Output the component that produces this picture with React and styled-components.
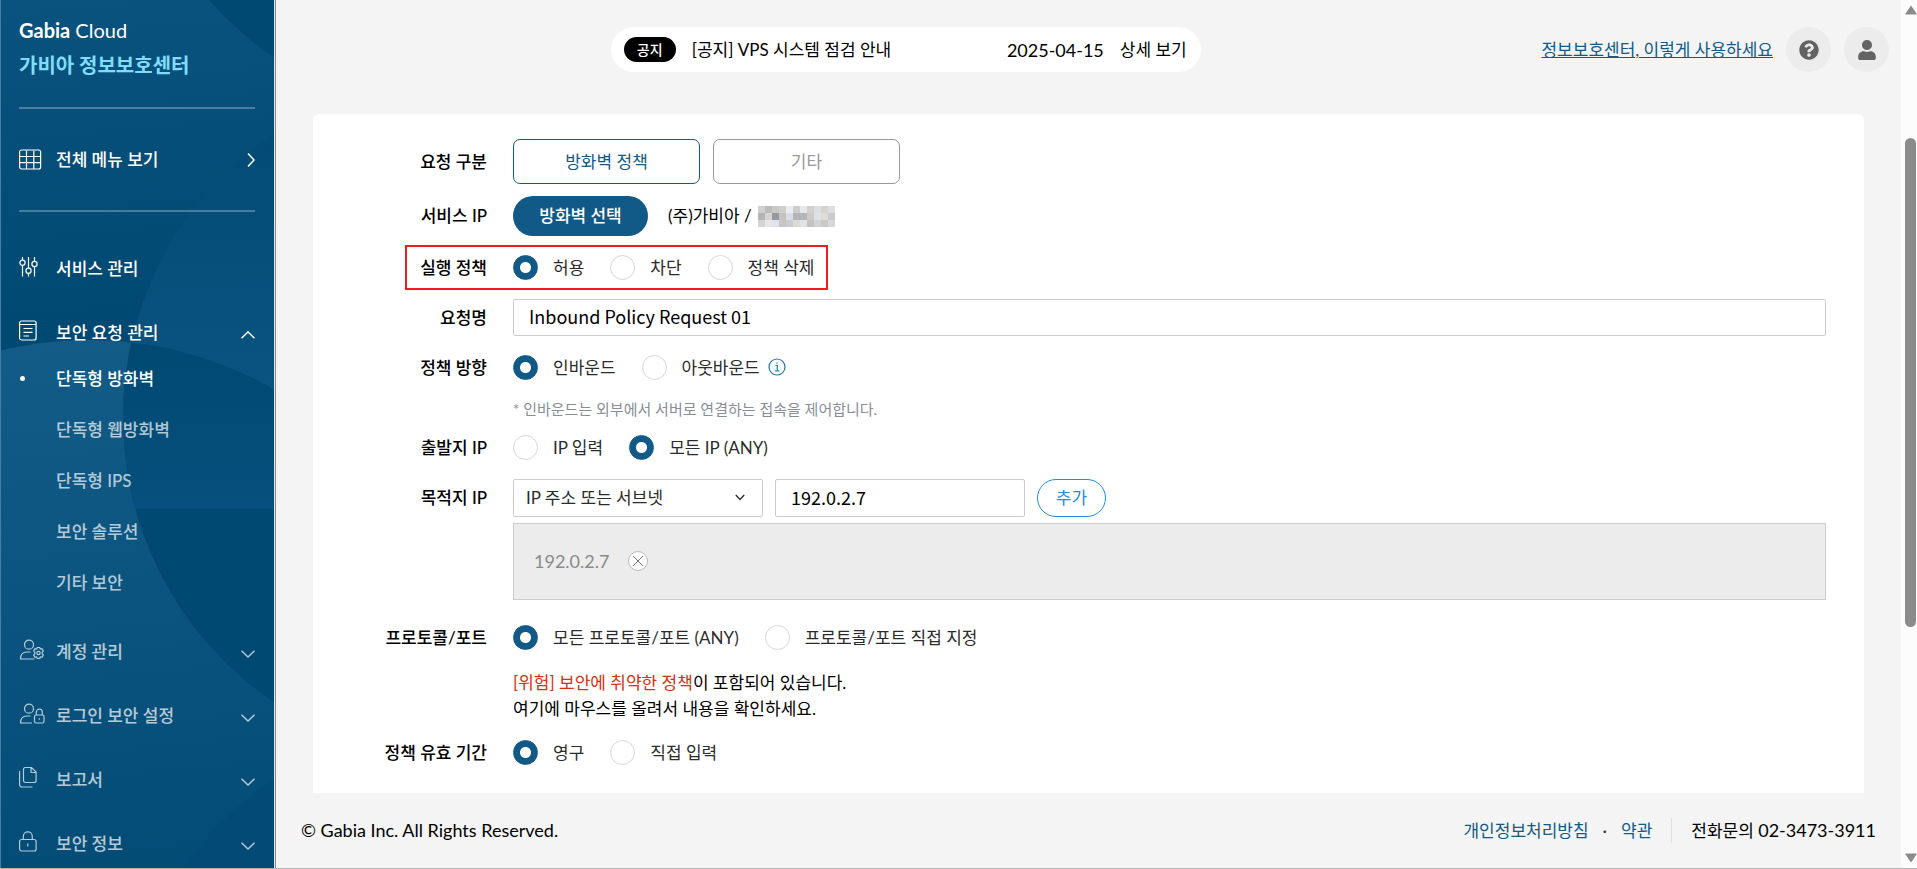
import React from 'react'
import styled, { createGlobalStyle, css } from 'styled-components'
import { FaQuestionCircle, FaUser } from 'react-icons/fa'

const menuTop = [
  { label: '서비스 관리', icon: 'sliders', active: true },
  { label: '보안 요청 관리', icon: 'document', active: true, open: true },
];

const subMenu = ['단독형 방화벽', '단독형 웹방화벽', '단독형 IPS', '보안 솔루션', '기타 보안'];

const menuBottom = [
  { label: '계정 관리', icon: 'userGear' },
  { label: '로그인 보안 설정', icon: 'userLock' },
  { label: '보고서', icon: 'copy' },
  { label: '보안 정보', icon: 'lock' },
];

const icons = {
  sliders: (
    <>
      <path d="M3.500 1v3M3.500 9.500V20.500M9.500 1v11M9.500 17.500v3M15.500 1v4.500M15.500 10.500v10" />
      <circle cx="3.500" cy="6.800" r="2.600" />
      <circle cx="9.500" cy="14.700" r="2.600" />
      <circle cx="15.500" cy="8" r="2.600" />
    </>
  ),
  document: (
    <>
      <rect x="0.600" y="1" width="16.500" height="19" rx="2" />
      <path d="M1 4.500h16M4.500 8.500h9M4.500 12.300h9M4.500 16h5.500" />
    </>
  ),
  userGear: (
    <>
      <circle cx="10" cy="5.700" r="4.500" />
      <path d="M15.500 20H1.500c0-4.500 2.500-7 6.500-7h3.500" />
      <circle cx="19.500" cy="14" r="1.700" />
      <path d="M18.200 8.500h2.600l.5 1.600 1.700-.4 1.300 2.200-1.100 1.300v1.600l1.100 1.300-1.300 2.200-1.700-.4-.5 1.600h-2.600l-.5-1.600-1.700.4-1.300-2.200 1.100-1.300v-1.600l-1.100-1.300 1.300-2.200 1.700.4z" />
    </>
  ),
  userLock: (
    <>
      <circle cx="10" cy="5.700" r="4.500" />
      <path d="M13 20H1.500c0-4.500 2.500-7 6.500-7h3.500" />
      <rect x="15.500" y="12" width="9.500" height="8" rx="1.500" />
      <path d="M17.300 12V9.200a3 3 0 0 1 6 0V12M20.300 15.300v1.500" />
    </>
  ),
  copy: (
    <>
      <path d="M4.500 2.500a2 2 0 0 1 2-2h6L17.100 5v8.500a2 2 0 0 1-2 2H6.500a2 2 0 0 1-2-2zM12 .5V5.500h5" />
      <path d="M.6 4v13.500a2.500 2.500 0 0 0 2.500 2.500H13.500" />
    </>
  ),
  lock: (
    <>
      <rect x="0.600" y="8.500" width="16.500" height="11.500" rx="2" />
      <path d="M4.300 8.500V5.400a4.500 4.500 0 0 1 9 0V8.500M8.800 12.500v3" />
    </>
  ),
  grid: (
    <>
      <rect x="0.600" y="1" width="21" height="19" rx="2" />
      <path d="M7.500 1.500v18.500M14.800 1.500v18.500M1 7.500h21M1 13.700h21" />
    </>
  ),
};

const Icon = ({ name }) => (
  <MenuIcon width="26" height="21" viewBox="0 0 26 21" aria-hidden="true">{icons[name]}</MenuIcon>
)

const Chevron = ({ up }) => (
  <ChevronIcon width="14" height="8" viewBox="0 0 14 8" aria-hidden="true">
    <path d={up ? 'M.5 7.200 7 1l6.500 6.200' : 'M.5 .8 7 7 13.500 .8'} />
  </ChevronIcon>
)

const MenuItem = ({ item }) => (
  <MenuLink href="#" $active={item.active}>
    <Icon name={item.icon} />
    <span>{item.label}</span>
    {item.icon !== 'sliders' && <Chevron up={item.open} />}
  </MenuLink>
)

const SidebarArt = () => (
  <Art width="273" height="869" aria-hidden="true">
    <defs>
      <linearGradient id="base" gradientUnits="userSpaceOnUse" x1="0" y1="-305" x2="60" y2="325">
        <stop offset="0" stopColor="#135c88" />
        <stop offset="1" stopColor="#004973" />
      </linearGradient>
      <linearGradient id="lower" gradientUnits="userSpaceOnUse" x1="0" y1="340" x2="60" y2="970">
        <stop offset="0" stopColor="#135c88" />
        <stop offset="1" stopColor="#004973" />
      </linearGradient>
      <linearGradient id="glow" gradientUnits="userSpaceOnUse" x1="0" y1="130" x2="0" y2="400">
        <stop offset="0" stopColor="#034b76" />
        <stop offset="1" stopColor="#0a5481" />
      </linearGradient>
      <linearGradient id="cross" gradientUnits="userSpaceOnUse" x1="0" y1="344" x2="0" y2="509">
        <stop offset="0" stopColor="#004973" />
        <stop offset="1" stopColor="#06507d" />
      </linearGradient>
      <clipPath id="lowerClip"><circle cx="88" cy="710" r="370" /></clipPath>
      <clipPath id="upperHalf"><rect y="330" width="275" height="179" /></clipPath>
    </defs>
    <rect width="275" height="869" fill="url(#base)" />
    <circle cx="465" cy="-227" r="343" fill="#004973" />
    <circle cx="465" cy="418" r="343" fill="url(#glow)" />
    <g clipPath="url(#lowerClip)">
      <rect y="330" width="275" height="539" fill="url(#lower)" />
      <circle cx="465" cy="418" r="343" fill="#004973" />
      <circle cx="465" cy="418" r="343" fill="url(#cross)" clipPath="url(#upperHalf)" />
      <circle cx="465" cy="1063" r="343" fill="#034b76" />
    </g>
  </Art>
)

const Choice = ({ name, options, checked, children }) => (
  <Choices role="radiogroup">
    {options.map((option, i) => (
      <ChoiceLabel key={option}>
        <Radio type="radio" name={name} defaultChecked={i === checked} />
        {option}
      </ChoiceLabel>
    ))}
    {children}
  </Choices>
)

const mosaic = [
  '#d0d0d0', '#bcbcbf', '#c9c8c4', '#d0cfcb', '#e8ecf4', '#cfcdcb', '#e6e9ec', '#d0cfcd', '#dedede', '#d5d3ce', '#dcdee2',
  '#b4b4b4', '#d4d4d4', '#96999e', '#c5c2bf', '#d8dce8', '#b5b5b8', '#b5b5b8', '#cccbc9', '#dfe1e8', '#dddcd6', '#c9cacd',
  '#d4d4d4', '#e8e6e4', '#dfe2ea', '#c8c6c4', '#cbccd0', '#dbd9d5', '#e0e2e6', '#c5c3c0', '#d2d3d6', '#cbc9c5', '#d8d8da',
];

const App = () => {
  return (
    <>
      <GlobalStyle />
      <Layout>
        <Sidebar>
          <SidebarArt />
          <Brand>
            <BrandName><strong>Gabia</strong> Cloud</BrandName>
            <BrandSub>가비아 정보보호센터</BrandSub>
          </Brand>
          <AllMenu href="#">
            <Icon name="grid" />
            <span>전체 메뉴 보기</span>
            <svg width="8" height="14" viewBox="0 0 8 14" aria-hidden="true"><path d="M1 .5 7 7 1 13.500" /></svg>
          </AllMenu>
          <Nav>
            <MenuGroup>
              {menuTop.map(item => <MenuItem key={item.label} item={item} />)}
            </MenuGroup>
            <SubMenu>
              {subMenu.map((label, i) => (
                <li key={label}><SubLink href="#" $active={i === 0}>{label}</SubLink></li>
              ))}
            </SubMenu>
            <MenuGroup>
              {menuBottom.map(item => <MenuItem key={item.label} item={item} />)}
            </MenuGroup>
          </Nav>
        </Sidebar>

        <Main>
          <Header>
            <NoticeWrap>
              <Notice>
                <Badge>공지</Badge>
                <NoticeTitle>[공지] VPS 시스템 점검 안내</NoticeTitle>
                <NoticeDate>2025-04-15</NoticeDate>
                <NoticeLink href="#">상세 보기</NoticeLink>
              </Notice>
            </NoticeWrap>
            <GuideLink href="#">정보보호센터, 이렇게 사용하세요</GuideLink>
            <RoundButton aria-label="도움말"><FaQuestionCircle size={20} /></RoundButton>
            <RoundButton aria-label="내 계정"><FaUser size={20} /></RoundButton>
          </Header>

          <Card>
            <Row $tight>
              <Label>요청 구분</Label>
              <Field $gap={13}>
                <TypeButton type="button" $active>방화벽 정책</TypeButton>
                <TypeButton type="button">기타</TypeButton>
              </Field>
            </Row>
            <Row>
              <Label>서비스 IP</Label>
              <Field $gap={20}>
                <PillButton type="button">방화벽 선택</PillButton>
                <ServiceName>
                  (주)가비아 /
                  <Mosaic>{mosaic.map((color, i) => <i key={i} style={{ background: color }} />)}</Mosaic>
                </ServiceName>
              </Field>
            </Row>
            <Row $marked>
              <Label>실행 정책</Label>
              <Choice name="action" options={['허용', '차단', '정책 삭제']} checked={0} />
            </Row>
            <Row>
              <Label as="label" htmlFor="requestName">요청명</Label>
              <TextInput id="requestName" defaultValue="Inbound Policy Request 01" />
            </Row>
            <Row>
              <Label>정책 방향</Label>
              <Choice name="direction" options={['인바운드', '아웃바운드']} checked={0}>
                <InfoIcon width="18" height="18" viewBox="0 0 18 18" aria-hidden="true">
                  <circle cx="9" cy="9" r="8" />
                  <path d="M7.500 7.500H9.300V13M7 13h4.500M9 4.500v1.300" />
                </InfoIcon>
              </Choice>
              <Note>* 인바운드는 외부에서 서버로 연결하는 접속을 제어합니다.</Note>
            </Row>
            <Row>
              <Label>출발지 IP</Label>
              <Choice name="source" options={['IP 입력', '모든 IP (ANY)']} checked={1} />
            </Row>
            <Row>
              <Label>목적지 IP</Label>
              <Field $gap={12}>
                <SelectBox>
                  <select aria-label="목적지 유형">
                    <option>IP 주소 또는 서브넷</option>
                  </select>
                  <svg width="10" height="7" viewBox="0 0 10 7" aria-hidden="true"><path d="M.8 1 5 5.500 9.200 1" /></svg>
                </SelectBox>
                <TextInput $short aria-label="목적지 IP" defaultValue="192.0.2.7" />
                <AddButton type="button">추가</AddButton>
              </Field>
              <IpList>
                192.0.2.7
                <RemoveButton type="button" aria-label="삭제">
                  <svg width="12" height="12" viewBox="0 0 12 12"><path d="M1 1l10 10M11 1 1 11" /></svg>
                </RemoveButton>
              </IpList>
            </Row>
            <Row $loose>
              <Label>프로토콜/포트</Label>
              <Choice name="protocol" options={['모든 프로토콜/포트 (ANY)', '프로토콜/포트 직접 지정']} checked={0} />
              <Warning>
                <em>[위험] 보안에 취약한 정책</em>이 포함되어 있습니다.<br />
                여기에 마우스를 올려서 내용을 확인하세요.
              </Warning>
            </Row>
            <Row>
              <Label>정책 유효 기간</Label>
              <Choice name="period" options={['영구', '직접 입력']} checked={0} />
            </Row>
          </Card>

          <Footer>
            <Copyright>© Gabia Inc. All Rights Reserved.</Copyright>
            <FooterLinks>
              <a href="#">개인정보처리방침</a>
              <span>·</span>
              <a href="#">약관</a>
            </FooterLinks>
            <Contact>전화문의 <span>02-3473-3911</span></Contact>
          </Footer>
        </Main>

        <ScrollTrack aria-hidden="true">
          <svg width="12" height="10" viewBox="0 0 12 10"><path d="M6 0.500 11.500 8.500q.5 1-.5 1H1q-1 0-.5-1z" /></svg>
          <ScrollThumb />
          <svg width="12" height="10" viewBox="0 0 12 10"><path d="M6 9.500 11.500 1.500q.5-1-.5-1H1q-1 0-.5 1z" /></svg>
        </ScrollTrack>
      </Layout>
    </>
  )
}

export default App;

const GlobalStyle = createGlobalStyle`
  *, *::before, *::after {
    box-sizing: border-box;
  }
  body {
    margin: 0;
    background: #f4f4f4;
    color: #000;
    font-family: Lato, 'Noto Sans CJK KR', sans-serif;
    font-size: 17px;
    line-height: 24px;
  }
  button, input, select {
    font: inherit;
    margin: 0;
  }
  a {
    color: inherit;
    text-decoration: none;
  }
`;

const Layout = styled.div`
  display: grid;
  grid-template-columns: 276px 1fr 16px;
  height: 100vh;
  border-bottom: 1px solid #b3b3b3;
`;

const Sidebar = styled.aside`
  position: relative;
  overflow: hidden;
  padding: 18px 20px 0 18px;
  border-left: 1px solid #4580a4;
  border-right: 1px solid #8a8a8a;
  background: linear-gradient(to left, #e4e8eb 1px, #004973 1px);
  color: #fff;
`;

const Art = styled.svg`
  position: absolute;
  top: 0;
  left: 0;
`;

const Brand = styled.div`
  position: relative;
  height: 91px;
  border-bottom: 2px solid rgba(255, 255, 255, 0.27);
`;

const BrandName = styled.div`
  font-size: 20px;
  line-height: 24px;
  strong {
    font-weight: 700;
  }
`;

const BrandSub = styled.div`
  margin-top: 9px;
  font-size: 20px;
  font-weight: 700;
  line-height: 28px;
  color: #80dcfd;
`;

const AllMenu = styled.a`
  position: relative;
  display: flex;
  align-items: center;
  gap: 11px;
  height: 103px;
  border-bottom: 2px solid rgba(255, 255, 255, 0.27);
  font-weight: 500;
  svg {
    margin: 0;
    fill: none;
    stroke: #fff;
  }
  > svg:last-child {
    margin-left: auto;
    stroke-width: 1.5;
  }
`;

const Nav = styled.nav`
  position: relative;
  padding-top: 37px;
`;

const MenuGroup = styled.div`
  display: flex;
  flex-direction: column;
  gap: 24px;
`;

const MenuLink = styled.a`
  display: flex;
  align-items: center;
  gap: 11px;
  height: 40px;
  font-weight: 500;
  opacity: ${props => props.$active ? 1 : 0.7};
`;

const MenuIcon = styled.svg`
  margin-bottom: 6px;
  fill: none;
  stroke: #fff;
  stroke-width: 1.2;
`;

const ChevronIcon = styled.svg`
  margin: 4px 0 0 auto;
  fill: none;
  stroke: #fff;
  stroke-width: 1.5;
`;

const SubMenu = styled.ul`
  list-style: none;
  margin: 0 0 24px;
  padding: 0;
`;

const SubLink = styled.a`
  display: flex;
  align-items: center;
  height: 51px;
  padding-left: 37px;
  font-weight: 500;
  color: rgba(255, 255, 255, 0.7);
  ${props => props.$active && css`
    padding-left: 1px;
    color: #fff;
    &::before {
      content: '';
      width: 5px;
      height: 5px;
      margin-right: 31px;
      border-radius: 50%;
      background: #fff;
    }
  `}
`;

const Main = styled.main`
  padding: 27px 37px 0;
`;

const Header = styled.header`
  display: flex;
  align-items: center;
  margin: 0 -25px 42px -37px;
`;

const NoticeWrap = styled.div`
  flex: 1;
  display: flex;
  justify-content: center;
  padding-right: 6px;
`;

const Notice = styled.div`
  display: flex;
  align-items: center;
  width: 590px;
  height: 45px;
  padding: 0 14px 0 13px;
  border-radius: 23px;
  background: #fff;
`;

const Badge = styled.span`
  width: 52px;
  height: 25px;
  border-radius: 13px;
  background: #000;
  color: #fff;
  font-size: 14px;
  font-weight: 500;
  line-height: 25px;
  text-align: center;
`;

const NoticeTitle = styled.span`
  flex: 1;
  margin-left: 16px;
`;

const NoticeDate = styled.span`
  font-size: 18px;
`;

const NoticeLink = styled.a`
  margin-left: 16px;
`;

const GuideLink = styled.a`
  color: #115a87;
  text-decoration: underline;
`;

const RoundButton = styled.button`
  display: flex;
  align-items: center;
  justify-content: center;
  width: 45px;
  height: 45px;
  margin-left: 13px;
  padding: 0;
  border: 0;
  border-radius: 50%;
  background: #ececec;
  color: #636363;
`;

const Card = styled.form`
  padding: 25px 38px 28px 0;
  border-radius: 6px 6px 0 0;
  background: #fff;
`;

const Row = styled.div`
  position: relative;
  display: grid;
  grid-template-columns: 174px 1fr;
  column-gap: 26px;
  align-items: center;
  margin-bottom: ${props => props.$tight ? '12px' : '19px'};
  ${props => props.$loose && css`
    margin-top: 25px;
  `}
  &:last-child {
    margin-bottom: 0;
  }
  ${props => props.$marked && css`
    &::after {
      content: '';
      position: absolute;
      top: -10px;
      bottom: -10px;
      left: 92px;
      width: 423px;
      border: 2px solid #ed1c24;
      pointer-events: none;
    }
  `}
`;

const Label = styled.div`
  text-align: right;
  font-weight: 500;
`;

const Field = styled.div`
  display: flex;
  align-items: center;
  gap: ${props => props.$gap}px;
`;

const TypeButton = styled.button`
  width: 187px;
  height: 45px;
  border: 1px solid ${props => props.$active ? '#115a87' : '#999'};
  border-radius: 7px;
  background: #fff;
  color: ${props => props.$active ? '#115a87' : '#999'};
`;

const PillButton = styled.button`
  width: 135px;
  height: 40px;
  padding: 0;
  border: 0;
  border-radius: 20px;
  background: #115a87;
  color: #fff;
  font-weight: 500;
`;

const ServiceName = styled.div`
  display: flex;
  align-items: center;
  gap: 6px;
`;

const Mosaic = styled.span`
  display: grid;
  grid-template-columns: repeat(11, 7px);
  grid-auto-rows: 7px;
`;

const Choices = styled.div`
  display: flex;
  align-items: center;
  gap: 26px;
  height: 25px;
`;

const ChoiceLabel = styled.label`
  display: flex;
  align-items: center;
  gap: 15px;
  color: #2b2b2b;
`;

const Radio = styled.input`
  appearance: none;
  width: 25px;
  height: 25px;
  border: 1px solid #d3d7dd;
  border-radius: 50%;
  background: #fff;
  &:checked {
    border-color: #115a87;
    background: radial-gradient(circle, #fff 5px, #115a87 6px);
  }
`;

const InfoIcon = styled.svg`
  margin: -2px 0 0 -18px;
  fill: none;
  stroke: #2a75a5;
  stroke-width: 1.2;
`;

const Note = styled.p`
  grid-column: 2;
  margin: 19px 0 -3px;
  font-size: 15px;
  line-height: 20px;
  color: #868e96;
`;

const boxBorder = css`
  border: 1px solid #ccc;
  border-radius: 2px;
  background: #fff;
`;

const TextInput = styled.input`
  ${boxBorder}
  width: ${props => props.$short ? '250px' : '100%'};
  height: ${props => props.$short ? '38px' : '37px'};
  padding: 0 15px 3px;
  font-family: 'Noto Sans CJK KR', sans-serif;
  font-size: 18px;
  color: #000;
`;

const SelectBox = styled.div`
  position: relative;
  select {
    ${boxBorder}
    appearance: none;
    display: block;
    width: 250px;
    height: 38px;
    padding: 0 12px;
    color: #2b2b2b;
  }
  svg {
    position: absolute;
    top: 15px;
    right: 18px;
    fill: none;
    stroke: #333;
    stroke-width: 1.5;
    pointer-events: none;
  }
`;

const AddButton = styled.button`
  width: 69px;
  height: 38px;
  padding: 0;
  border: 1px solid #228be6;
  border-radius: 19px;
  background: #fff;
  color: #228be6;
`;

const IpList = styled.div`
  grid-column: 2;
  display: flex;
  align-items: center;
  gap: 19px;
  height: 77px;
  margin-top: 6px;
  padding: 0 20px 2px;
  border: 1px solid #ccc;
  background: #ececec;
  color: #8a8a8a;
  font-size: 18px;
`;

const RemoveButton = styled.button`
  display: flex;
  align-items: center;
  justify-content: center;
  width: 20px;
  height: 20px;
  padding: 0;
  border: 1px solid #bbb;
  border-radius: 50%;
  background: #fff;
  svg {
    flex: none;
    stroke: #777;
  }
`;

const Warning = styled.p`
  grid-column: 2;
  margin: 20px 0 -1px;
  line-height: 26px;
  em {
    font-style: normal;
    color: #d9300c;
  }
`;

const Footer = styled.footer`
  display: flex;
  align-items: center;
  height: 75px;
  margin: 0 -12px;
`;

const Copyright = styled.span`
  flex: 1;
  padding-bottom: 2px;
  font-size: 18px;
`;

const FooterLinks = styled.div`
  display: flex;
  gap: 14px;
  padding-right: 19px;
  color: #115a87;
  span {
    color: #333;
  }
`;

const Contact = styled.div`
  padding-left: 19px;
  border-left: 1px solid #dcdfe4;
  span {
    font-size: 18px;
  }
`;

const ScrollTrack = styled.div`
  display: flex;
  flex-direction: column;
  align-items: center;
  justify-content: space-between;
  padding: 5px 0 5px 3px;
  background: #fcfcfc;
  svg {
    fill: #8b8b8b;
  }
`;

const ScrollThumb = styled.div`
  width: 11px;
  height: 57%;
  margin-bottom: 103px;
  border-radius: 6px;
  background: #8b8b8b;
`;
